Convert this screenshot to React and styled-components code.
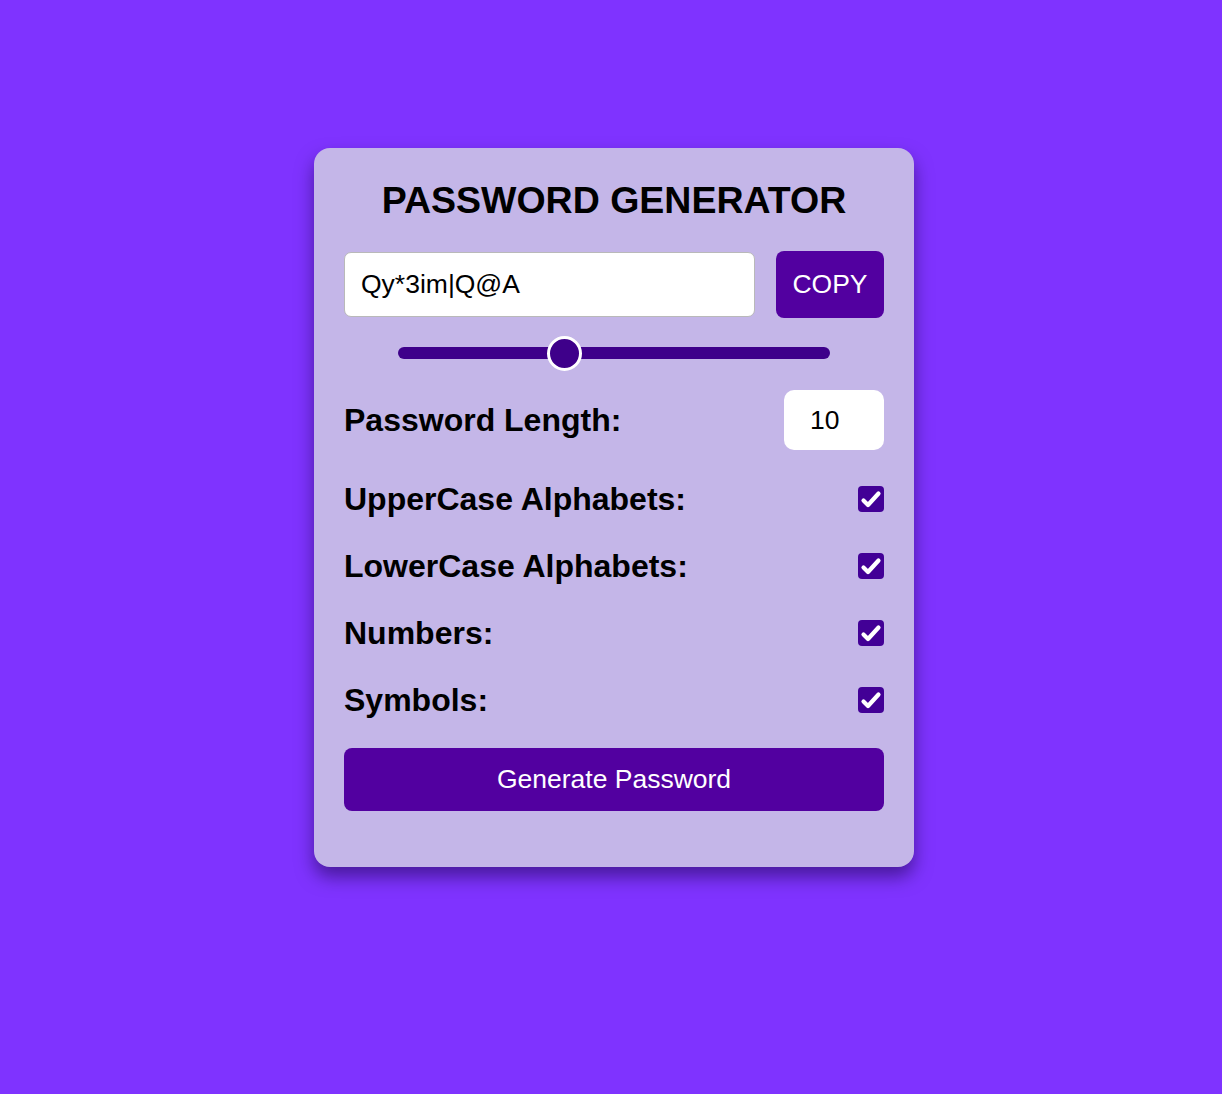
import React, { useState } from 'react'
import styled, { createGlobalStyle } from 'styled-components'

const GlobalStyle = createGlobalStyle`
  html, body {
    margin: 0;
    padding: 0;
    background: #7f33ff;
    font-family: "Liberation Sans", Arial, Helvetica, sans-serif;
  }
  * {
    box-sizing: border-box;
  }
`

function Option(props) {
  return (
    <StyledOption>
      <Label>{props.label}</Label>
      <CheckWrap>
        <HiddenCheck
          type="checkbox"
          checked={props.checked}
          onChange={props.onChange}
        />
        <CheckBox checked={props.checked}>
          {props.checked && (
            <svg width="26" height="26" viewBox="0 0 26 26">
              <path
                d="M5.5 14.5 L10 19 L20.5 7.5"
                fill="none"
                stroke="#fff"
                strokeWidth="4.2"
                strokeLinecap="round"
                strokeLinejoin="round"
              />
            </svg>
          )}
        </CheckBox>
      </CheckWrap>
    </StyledOption>
  )
}

export default function App() {
  const [length, setLength] = useState(10)
  const [opts, setOpts] = useState({
    upper: true,
    lower: true,
    numbers: true,
    symbols: true,
  })

  const toggle = (key) => () => setOpts({ ...opts, [key]: !opts[key] })

  return (
    <Page>
      <GlobalStyle />
      <Card>
        <Title>PASSWORD GENERATOR</Title>
        <OutputRow>
          <PasswordField type="text" value="Qy*3im|Q@A" readOnly />
          <CopyButton>COPY</CopyButton>
        </OutputRow>
        <SliderRow>
          <Range
            type="range"
            min="4"
            max="20"
            value={length}
            onChange={(e) => setLength(Number(e.target.value))}
          />
        </SliderRow>
        <LengthRow>
          <Label>Password Length:</Label>
          <LengthField
            type="number"
            value={length}
            onChange={(e) => setLength(Number(e.target.value))}
          />
        </LengthRow>
        <Options>
          <Option label="UpperCase Alphabets:" checked={opts.upper} onChange={toggle('upper')} />
          <Option label="LowerCase Alphabets:" checked={opts.lower} onChange={toggle('lower')} />
          <Option label="Numbers:" checked={opts.numbers} onChange={toggle('numbers')} />
          <Option label="Symbols:" checked={opts.symbols} onChange={toggle('symbols')} />
        </Options>
        <GenerateButton>Generate Password</GenerateButton>
      </Card>
    </Page>
  )
}

const Page = styled.div`
  min-height: 1094px;
  display: flex;
  justify-content: center;
  align-items: flex-start;
  padding: 148px 0 0 6px;
`

const Card = styled.div`
  width: 600px;
  display: flex;
  flex-direction: column;
  padding: 31px 30px 56px;
  background: #c4b6e8;
  border-radius: 16px;
  box-shadow: 0 10px 18px rgba(20, 0, 60, 0.5);
`

const Title = styled.h1`
  margin: 0;
  font-size: 37.5px;
  line-height: 42px;
  font-weight: 700;
  text-align: center;
  color: #000;
`

const OutputRow = styled.div`
  display: flex;
  align-items: center;
  gap: 21px;
  margin-top: 30px;
`

const PasswordField = styled.input`
  flex: 1;
  height: 65px;
  padding: 0 16px;
  border: 1px solid #b9b9b9;
  border-radius: 7px;
  background: #fff;
  font-family: inherit;
  font-size: 26.5px;
  color: #000;
  outline: none;
`

const CopyButton = styled.button`
  width: 108px;
  height: 67px;
  padding: 0;
  border: none;
  border-radius: 8px;
  background: #5200a0;
  color: #fff;
  font-family: inherit;
  font-size: 26.5px;
  cursor: pointer;
`

const SliderRow = styled.div`
  display: flex;
  justify-content: center;
  align-items: center;
  height: 34px;
  margin-top: 18px;
`

const Range = styled.input`
  -webkit-appearance: none;
  appearance: none;
  width: 432px;
  height: 12px;
  margin: 0;
  border-radius: 6px;
  background: #3e008a;
  outline: none;

  &::-webkit-slider-thumb {
    -webkit-appearance: none;
    box-sizing: border-box;
    width: 35px;
    height: 35px;
    border-radius: 50%;
    border: 3px solid #fff;
    background: #3e008a;
    cursor: pointer;
  }
`

const LengthRow = styled.div`
  display: flex;
  justify-content: space-between;
  align-items: center;
  margin-top: 20px;
`

const Label = styled.label`
  font-size: 32px;
  font-weight: 700;
  color: #000;
`

const LengthField = styled.input`
  width: 100px;
  height: 60px;
  padding: 0 0 0 26px;
  border: none;
  border-radius: 10px;
  background: #fff;
  font-family: inherit;
  font-size: 26.5px;
  color: #000;
  outline: none;
  -moz-appearance: textfield;

  &::-webkit-outer-spin-button,
  &::-webkit-inner-spin-button {
    -webkit-appearance: none;
    margin: 0;
  }
`

const Options = styled.div`
  display: flex;
  flex-direction: column;
  gap: 27px;
  margin-top: 29px;
`

const StyledOption = styled.div`
  display: flex;
  justify-content: space-between;
  align-items: center;
  height: 40px;
`

const CheckWrap = styled.span`
  position: relative;
  display: inline-flex;
  width: 26px;
  height: 26px;
`

const HiddenCheck = styled.input`
  position: absolute;
  inset: 0;
  margin: 0;
  opacity: 0;
  cursor: pointer;
`

const CheckBox = styled.span`
  display: inline-flex;
  width: 26px;
  height: 26px;
  border-radius: 4px;
  background: ${(props) => (props.checked ? '#420096' : '#fff')};
  pointer-events: none;
`

const GenerateButton = styled.button`
  height: 63px;
  margin-top: 28px;
  border: none;
  border-radius: 8px;
  background: #5200a0;
  color: #fff;
  font-family: inherit;
  font-size: 26.5px;
  cursor: pointer;
`
